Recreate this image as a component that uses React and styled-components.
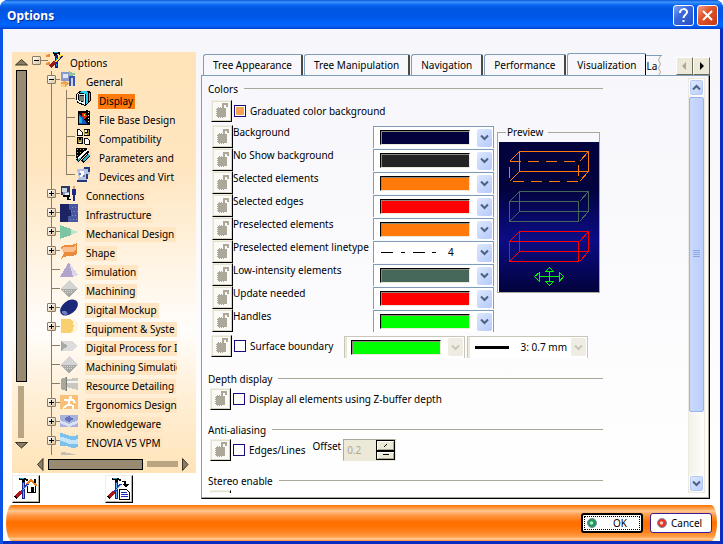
import React from "react";
import styled, { createGlobalStyle, css } from "styled-components";

const Global = createGlobalStyle`
  * { box-sizing: border-box; }
  html, body { margin: 0; height: 100%; }
  body { font: 10px/15px "Noto Sans", "Open Sans", sans-serif; color: #000; background: #fff; }
  button, input, select { font: inherit; color: inherit; margin: 0; padding: 0; border-radius: 0; }
  svg { display: block; flex: none; }
`;

/* ---------- window frame ---------- */

const Window = styled.div`
  display: flex;
  flex-direction: column;
  height: 100vh;
  overflow: hidden;
  border-radius: 8px 8px 0 0;
  background: linear-gradient(90deg, #0a52e8 50%, #0a2cc0 50%);
`;

const TitleBar = styled.header`
  display: flex;
  align-items: center;
  gap: 3px;
  height: 29px;
  flex: none;
  padding: 2px 5px 0 7px;
  background: linear-gradient(#0a52d8 0, #3c96ff 2px, #0a66f0 5px, #0055e2 9px, #0058ea 18px, #0066ff 25px, #0050e0 28px, #003dc4 29px);
`;

const Title = styled.h1`
  flex: 1;
  margin: 0;
  font: bold 12px/18px "Noto Sans", sans-serif;
  color: #fff;
  text-shadow: 1px 1px 0 #0a2a90;
`;

const CaptionButton = styled.button`
  display: grid;
  place-items: center;
  width: 21px;
  height: 21px;
  border: 1px solid #fff;
  border-radius: 3px;
  background: ${(p) =>
    p.$close
      ? "linear-gradient(135deg, #f0a08a, #e0552c 40%, #c43a12)"
      : "linear-gradient(135deg, #7fa4f4, #3a68dc 40%, #2450c8)"};
`;

const Client = styled.main`
  display: flex;
  gap: 5px;
  flex: 1;
  min-height: 0;
  margin: 0 3px;
  padding: 23px 10px 0 9px;
  background: linear-gradient(#f6f6fb, #fff);
`;

/* ---------- tree side ---------- */

const Side = styled.aside`
  display: flex;
  flex-direction: column;
  gap: 2px;
  width: 184px;
  flex: none;
  padding-bottom: 2px;
`;

const TreePanel = styled.nav`
  display: grid;
  grid-template: minmax(0, 1fr) 18px / 20px minmax(0, 1fr);
  flex: 1;
  min-height: 0;
  background: linear-gradient(#ffe4b9 0, #ffe6c0 28%, #fff5e6 52%, #fffdfa 66%, #ffefd6 82%, #ffe4b9 100%);
`;

const VBar = styled.div`
  display: flex;
  flex-direction: column;
  align-items: center;
  gap: 4px;
  padding: 7px 4px 6px 2px;
`;

const HBar = styled.div`
  grid-column: 1 / -1;
  display: flex;
  align-items: center;
  gap: 4px;
  padding: 0 7px 0 25px;
`;

const TreeThumb = styled.div`
  border: 1px solid #000;
  background: #998a72;
  ${(p) => (p.$h ? css`flex: 94; height: 11px;` : css`flex: 311; width: 11px;`)}
`;

const TreeTrack = styled.div`
  background: #b9a582;
  ${(p) => (p.$h ? css`flex: 32; height: 6px;` : css`flex: 52; width: 6px;`)}
`;

const TreeList = styled.ul`
  list-style: none;
  margin: 0 19px 0 0;
  padding: 0;
  overflow: hidden;
`;

const TreeRow = styled.li`
  display: flex;
  align-items: flex-start;
  height: 19px;
`;

const Trunk = styled.span`
  flex: none;
  width: 15px;
  height: 19px;
  background: ${(p) => (p.$line ? "linear-gradient(#8a7c66, #8a7c66) 4px 0 / 1px 100% no-repeat" : "none")};
`;

const Branch = styled.span`
  flex: none;
  width: 13px;
  height: 19px;
  padding-top: 4px;
  background:
    linear-gradient(#8a7c66, #8a7c66) 4px 8px / 9px 1px no-repeat,
    linear-gradient(#8a7c66, #8a7c66) 4px 0 / 1px ${(p) => (p.$root ? "0" : p.$last ? "9px" : "100%")} no-repeat;
`;

const Toggle = styled.button`
  display: grid;
  place-items: center;
  width: 9px;
  height: 9px;
  border: 1px solid #8a7c66;
  border-radius: 1px;
  background: linear-gradient(135deg, #fff, #d9c39c);
`;

const NodeLabel = styled.a`
  margin: 4px 0 0 ${(p) => (p.$root ? 6 : 7)}px;
  padding: 0 2px 0 1px;
  line-height: 15px;
  white-space: nowrap;
  color: #000;
  text-decoration: none;
  background: ${(p) => (p.$selected ? "#ff7a0a" : "#ffe5c2")};
`;

const Tools = styled.div`
  display: flex;
  gap: 65px;
`;

const ToolButton = styled.button`
  display: grid;
  place-items: center;
  width: 28px;
  height: 28px;
  border: 1px solid;
  border-color: #f0eee4 #000 #000 #f0eee4;
  box-shadow: inset -1px -1px 0 #b5b1a2;
  background: #fff;
`;

/* ---------- tabs ---------- */

const Content = styled.section`
  display: flex;
  flex-direction: column;
  flex: 1;
  min-width: 0;
  padding: 1px 0 6px;
`;

const TabStrip = styled.div`
  display: flex;
  align-items: flex-end;
  height: 22px;
  flex: none;
  padding-left: 2px;
  white-space: nowrap;
`;

const Tab = styled.button`
  height: ${(p) => (p.$active ? 23 : 21)}px;
  flex: none;
  padding: 0 9px;
  border: 1px solid #7f9db9;
  border-bottom: 0;
  border-right: ${(p) => (p.$active ? "1px solid #000" : "2px solid #4a483f")};
  border-radius: 3px 2px 0 0;
  margin: 0 ${(p) => (p.$active ? 0 : 1)}px ${(p) => (p.$active ? -1 : 0)}px 0;
  background: #f8f8fc;
`;

const CutTab = styled.button`
  display: flex;
  height: 20px;
  width: 16px;
  border: 0;
  border-top: 1px solid #7f9db9;
  background: #f8f8fc;
  line-height: 20px;
`;

const TabArrows = styled.div`
  display: flex;
  margin-left: auto;
`;

const TabArrow = styled.button`
  display: grid;
  place-items: center;
  width: 17px;
  height: 18px;
  border: 1px solid;
  border-color: #fff #6e6b5e #6e6b5e #fff;
  background: #ece9d8;
  color: ${(p) => (p.disabled ? "#aca899" : "#000")};
`;

const Panel = styled.div`
  display: flex;
  flex: 1;
  min-height: 0;
  padding: 2px 2px 5px 0;
  border: 1px solid #7f9db9;
  border-right-color: #000;
  border-bottom-color: #000;
  box-shadow: inset -1px -1px 0 #aca899;
`;

const Scroller = styled.div`
  flex: 1;
  min-width: 0;
  padding: 4px 0 0 6px;
  overflow: hidden;
`;

const ScrollBar = styled.div`
  display: flex;
  flex-direction: column;
  gap: 1px;
  width: 17px;
  margin-right: 2px;
  border: 1px solid #eceade;
  background: linear-gradient(90deg, #f2f1ea, #fefefb);
`;

const ScrollButton = styled.button`
  display: grid;
  place-items: center;
  height: 17px;
  flex: none;
  border: 1px solid #fff;
  border-radius: 3px;
  box-shadow: inset 0 0 0 1px #b4c8f6;
  background: linear-gradient(135deg, #e1eafe, #b9cdfb);
`;

const ScrollThumb = styled.div`
  display: grid;
  place-items: center;
  flex: 316;
  border: 1px solid #9ab4ea;
  border-radius: 2px;
  background: linear-gradient(90deg, #c9d8fd, #bccffc);
`;

const ScrollSpace = styled.div`
  flex: 62;
`;

/* ---------- option form ---------- */

const Form = styled.form`
  width: 395px;
`;

const Group = styled.section`
  margin-bottom: ${(p) => (p.$wide ? 15 : 13)}px;
`;

const Heading = styled.h2`
  display: flex;
  align-items: flex-start;
  gap: 6px;
  margin: 0 0 ${(p) => (p.$wide ? 3 : 1)}px;
  font: inherit;
  &::after {
    content: "";
    flex: 1;
    height: 1px;
    margin-top: 6px;
    background: #aca899;
  }
`;

const Line = styled.div`
  display: flex;
  align-items: center;
  gap: 2px;
  height: 22px;
  padding-left: ${(p) => (p.$wide ? 3 : 2)}px;
`;

const LockButton = styled.button`
  display: grid;
  place-items: center;
  flex: none;
  width: 21px;
  height: ${(p) => (p.$tall ? 23 : 22)}px;
  border: 1px solid;
  border-color: #f1efe2 #000 #000 #f1efe2;
  box-shadow: inset -1px -1px 0 #d8d4c2, inset 1px 1px 0 #e4e1d0;
  background: #fbfaf6;
`;

const CheckLabel = styled.label`
  display: flex;
  align-items: center;
  gap: 4px;
  white-space: nowrap;
`;

const Check = styled.input`
  appearance: none;
  width: 12px;
  height: 12px;
  border: 1px solid #1c0a80;
  background: #fff;
  &:checked {
    background: #f5a259;
    box-shadow: inset 0 0 0 1px #fff;
  }
`;

const ColorArea = styled.div`
  display: flex;
  align-items: flex-start;
  gap: 3px;
  margin: 3px 0;
`;

const ColorRows = styled.div`
  display: flex;
  flex-direction: column;
  width: 286px;
  padding-left: 4px;
`;

const ColorRow = styled.div`
  display: flex;
  height: 23px;
`;

const ColorLabel = styled.label`
  flex: 1;
  min-width: 0;
  white-space: nowrap;
`;

const Combo = styled.span`
  display: flex;
  align-items: center;
  flex: none;
  width: 121px;
  height: 22px;
  margin-top: 1px;
  padding: 0 1px 0 6px;
  border: 1px solid ${(p) => (p.$off ? "#c9c7ba" : "#7f9db9")};
  border-bottom: 0;
  background: ${(p) => (p.$off ? "linear-gradient(90deg, #ece9d8 2px, #fff 2px)" : "#fff")};
`;

const Swatch = styled.select`
  appearance: none;
  width: 90px;
  height: 15px;
  margin-right: auto;
  border: 1px solid;
  border-color: #000 #ece9d8 #ece9d8 #000;
  box-shadow: inset 1px 1px 0 #8d8a7c;
  background: ${(p) => p.$color};
  opacity: 1;
`;

const LineSelect = styled.select`
  appearance: none;
  flex: 1;
  min-width: 0;
  border: 0;
  background: none;
  color: #000;
  opacity: 1;
  text-align: ${(p) => (p.$right ? "right" : "left")};
  padding: 0 ${(p) => (p.$right ? 4 : 0)}px 0 ${(p) => (p.$right ? 0 : 10)}px;
`;

const Arrow = styled.span`
  display: grid;
  place-items: center;
  flex: none;
  width: 15px;
  height: 18px;
  border-radius: 2px;
  color: ${(p) => (p.$off ? "#c9c7ba" : "#4d6185")};
  background: ${(p) => (p.$off ? "#efede3" : "linear-gradient(135deg, #dde8fe, #b5cafa)")};
`;

const Preview = styled.fieldset`
  width: 103px;
  margin: 0;
  padding: 2px 0 0 1px;
  border: 1px solid #aca899;
`;

const Legend = styled.legend`
  margin-left: 7px;
  padding: 0 5px 0 1px;
`;

const BoundaryLabel = styled.div`
  width: 108px;
`;

const OffsetLabel = styled.label`
  align-self: flex-start;
  padding-left: 5px;
`;

const Spinner = styled.span`
  display: flex;
  width: 53px;
  height: 22px;
  border: 1px solid;
  border-color: #aca899 #ece9d8 #ece9d8 #aca899;
  background: #ece9d8;
`;

const SpinInput = styled.input`
  flex: 1;
  min-width: 0;
  padding-left: 3px;
  border: 0;
  background: none;
  color: #aca899;
`;

const SpinButtons = styled.span`
  display: grid;
  width: 19px;
`;

const SpinButton = styled.button`
  display: grid;
  place-items: center;
  border: 1px solid #000;
  box-shadow: inset 1px 1px 0 #fff, inset -1px -1px 0 #aca899;
  background: #ece9d8;
`;

/* ---------- footer ---------- */

const Footer = styled.footer`
  flex: none;
  margin: 0 3px;
  padding: 0 3px;
  border-bottom: 3px solid #0a2cc0;
  background: #fff;
`;

const FooterBar = styled.div`
  display: flex;
  justify-content: flex-end;
  align-items: center;
  gap: 7px;
  height: 36px;
  padding-right: 5px;
  border-radius: 6px / 18px;
  background: linear-gradient(#ff7400 0, #ff9a45 3px, #ffc890 6px, #ff9a48 10px, #ff8220 14px, #ff7000 17px, #ff7200 21px, #ff8420 27px, #ffa048 32px, #ffd0a0 34px, #ff8a28 36px);
`;

const DialogButton = styled.button`
  display: flex;
  align-items: center;
  width: 62px;
  height: 20px;
  padding-left: ${(p) => (p.$main ? 4 : 6)}px;
  gap: ${(p) => (p.$main ? 16 : 4)}px;
  border: ${(p) => (p.$main ? "2px solid #000" : "1px solid #3a1c9a")};
  border-radius: 3px;
  outline: ${(p) => (p.$main ? "1px dotted #000" : "none")};
  outline-offset: -4px;
  background: #fff;
`;

/* ---------- drawings ---------- */

const NodeSvg = (p) => <svg width="18" height="18" viewBox="0 0 18 18" shapeRendering="crispEdges" aria-hidden="true" {...p} />;

const nodeIcons = {
  options: (
    <>
      <path fill="#e88c3c" d="M1 2h4v3H1zM1 10h4v3H1z" />
      <path fill="#f9c79a" d="M1 2h2v1H1zM1 10h2v1H1z" />
      <path stroke="#8a7c66" fill="none" d="M0 8.500h3" />
      <path fill="#000" d="M8 0h7v3h-1V2h-2v2H9V2H8z" />
      <path fill="#12a5d8" d="M9 0h4v1H9z" />
      <path fill="#16169c" d="M10 3h3v13h-3z" />
      <path fill="#12a5d8" d="M11 6h1v8h-1z" />
      <path stroke="#ffe21c" strokeWidth="2" d="M17 3l-7 8" />
      <path stroke="#16169c" d="M17.500 4l-7 8" />
      <path stroke="#a0141c" strokeWidth="3" d="M10 10l-5 5" />
    </>
  ),
  general: (
    <>
      <path fill="#8b99c8" d="M1 1h8v9H1z" />
      <path fill="#dfe6f6" d="M3 3h5v4H3z" />
      <path fill="#88c4a4" d="M9 0l7 3-7 4z" />
      <path fill="#3d55a8" d="M9 5h6v10H9z" />
      <path fill="#c9d3ef" d="M11 7h2v8h-2z" />
      <path fill="#f0a050" d="M1 11l4-1 4 2-3 4H1z" />
      <path fill="#f8d080" d="M1 13h4v3H1z" />
    </>
  ),
  display: (
    <>
      <path fill="#000" d="M3 2l3-2h8l3 2v9l-5 5h-2L2 13 1 5z" />
      <path fill="#28d0f0" d="M6 1h7l1 1v11l-2 2V4L5 2zM15 2l1 1v8l-1 1z" />
      <path fill="#e8fbff" d="M3 3l7 1 1 1v9l-1 1-7-3-1-2V5z" />
      <path fill="#000" d="M3 4l6 1 1 1v7l-6-2-1-2z" />
      <path fill="#7c8474" d="M4 5l5 1v6l-5-2z" />
    </>
  ),
  file: (
    <>
      <path fill="#000" d="M3 2h9V0h2v2h2v14H3z" />
      <path fill="#1554c4" d="M4 4l5 5 4 6H4z" />
      <path fill="#14b8e0" d="M4 6l3 3v5H4z" />
      <path fill="#e42410" d="M7 4h4l2 3-3 3-3-3z" />
      <path fill="#ffe020" d="M9 5h2v2H9z" />
      <path stroke="#fff" strokeDasharray="1 2" d="M14.500 3v12" />
    </>
  ),
  compat: (
    <>
      <path fill="#fff" stroke="#000" d="M2.500 1.500h3l2 2v4h-5zM10.500 10.500h3l2 2v4h-5z" />
      <path fill="#000" d="M9 1h7v7H9zM2 9h6v7H2z" />
      <path fill="#a89430" d="M10 2h1v3h3V2h1v5h-5zM3 10h1v2h2v-2h1v5H3z" />
      <path fill="#fff" d="M11 2h2v2h-2zM11 6h2v1h-2zM4 14h2v1H4z" />
    </>
  ),
  params: (
    <>
      <path fill="#f8d8b8" d="M1 1h16v15H1z" />
      <path fill="#000" d="M1 1h12L3 11H1z" />
      <path stroke="#d8c040" strokeDasharray="1 2" d="M2 2.500h9M2 5.500h6M2 8.500h3" />
      <path stroke="#000" strokeWidth="4" d="M2 14L14 3" />
      <path stroke="#fff" strokeWidth="2" d="M3 12L14 2" />
      <path stroke="#000" strokeWidth="4" d="M8 15l7-7" />
      <path stroke="#2ab4c8" strokeWidth="2" d="M9 14l6-6M3 14l3-3" />
    </>
  ),
  devices: (
    <>
      <path fill="#b8c4e4" d="M2 3h6l2-2h6v6l-3 3v6H2l2-5z" />
      <path fill="#28387c" d="M10 1h6v5h-2V3h-4zM2 14h11v2H2zM12 8h2v5h-2z" />
      <path fill="#fff" d="M5 5h4l1 4-4 3z" />
      <path fill="#6478b8" d="M4 7h2v2H4zM8 9h3v2H8z" />
    </>
  ),
  connections: (
    <>
      <path fill="#2a3a60" d="M1 1h9v9H1z" />
      <path fill="#c8d4e8" d="M2 3h5v4H2z" />
      <path fill="#8ca0c4" d="M3 7h6v3H3z" />
      <path fill="#000" d="M3 10h7v2H3zM7 12h4v3H7z" />
      <path fill="#e8eef8" d="M5 8h4v2H5zM9 12h3v2H9z" />
      <path fill="#dca078" d="M13 1h2v3h-2z" />
      <path fill="#1c2c80" d="M12 4h4v6h-1v6h-2v-6h-1z" />
    </>
  ),
  infra: (
    <>
      <path fill="#4858a0" d="M0 0h18v18H0z" />
      <path fill="#1c2464" d="M0 0h9v6h2v6H8v6H0z" />
      <path stroke="#8090c8" strokeDasharray="1 2" d="M12 3.500h6M11 7.500h7M12 11.500h6M10 15.500h8" />
    </>
  ),
  mech: (
    <>
      <path fill="#7cc4a4" d="M0 2l11 4v6L0 16z" />
      <path fill="#b8e4d0" d="M11 6l7 3-7 3z" />
    </>
  ),
  shape: (
    <>
      <path fill="#e88c3c" d="M1 6c3-6 8 0 16-5v10c-5 7-10 0-16 6l3-6z" />
      <path fill="#f8c090" d="M2 6c4-4 9 2 14-3v5c-6 5-8-1-13 3z" />
    </>
  ),
  simulation: (
    <>
      <path fill="#b0a4cc" d="M9 1L0 16h13z" />
      <path fill="#dcd8ea" d="M9 1l9 13-5 2z" />
    </>
  ),
  machining: (
    <>
      <path fill="#d4d4d4" d="M9 0l9 9H0z" />
      <path fill="#a8a8a4" d="M0 9h18l-9 8z" />
      <path stroke="#d8d8d8" strokeDasharray="1 1" d="M3 10.500h12M5 12.500h8" />
    </>
  ),
  mockup: (
    <g shapeRendering="auto">
      <ellipse cx="9" cy="8.500" rx="10" ry="6.500" transform="rotate(-38 9 8.500)" fill="#1c2878" />
      <path fill="#7080c0" d="M2 12h4l2 3-3 1-3-2z" />
    </g>
  ),
  equipment: (
    <>
      <path fill="#fff4dc" d="M10 2h5l3 4v5l-3 4h-5z" />
      <path fill="#f8d070" d="M1 1h9c5 2 5 12 0 14H1z" />
    </>
  ),
  process: (
    <>
      <path fill="#dcdcdc" d="M1 4h11l6 5-6 5H1z" />
      <path fill="#a8a8a8" d="M1 4l7 5-7 5z" />
    </>
  ),
  resource: (
    <>
      <path fill="#a8a8a0" d="M1 4l5-2v14l-5-2z" />
      <path fill="#c8c8c0" d="M6 4l12-1v12L6 12z" />
      <path fill="#f4f4f0" d="M6 6h12v2H6z" />
      <path stroke="#808078" fill="none" d="M6.500 2v14" />
    </>
  ),
  ergo: (
    <>
      <path fill="#f8c078" d="M0 1h18v14H0z" />
      <path fill="#fff" d="M9 2h3v3H9z" />
      <path stroke="#fff" strokeWidth="2" fill="none" d="M4 6h9l2 3M10 6l-2 5-5 3M8 10l5 2v3" />
    </>
  ),
  knowledge: (
    <>
      <path fill="#a8b0dc" d="M0 2h18v12H0z" />
      <path fill="#dce0f4" d="M0 7l9 4 9-4v3l-9 4-9-4z" />
      <path fill="#6474b8" d="M9 3l5 3-5 3-5-3z" />
    </>
  ),
  enovia: (
    <>
      <path fill="#c4e4f8" d="M0 1c6 0 8 5 18 2v12c-8 3-10-3-18-1z" />
      <path fill="#7cc0ec" d="M0 1c6 0 8 5 18 2v4C8 10 6 4 0 5zM0 9c6 0 8 5 18 3v3c-8 3-10-3-18-1z" />
    </>
  ),
  tail: <path fill="#c4c0b4" d="M1 1h5v4H1zM6 2h5v3H6zM11 3h4v2h-4z" />,
};

const Chevron = ({ up }) => (
  <svg width="9" height="7" viewBox="0 0 9 7" fill="none" stroke={up === undefined ? "currentColor" : "#4d6185"} strokeWidth="2" aria-hidden="true">
    <path d={up ? "M1 5.500l3.500-3.500L8 5.500" : "M1 1.500L4.500 5 8 1.500"} />
  </svg>
);

const TreeArrow = ({ dir }) => {
  const flat = dir === "up" || dir === "down";
  const d = { up: "M6.500 .5L12.500 6H.5z", down: "M.5 .5h12L6.500 6z", left: "M6 .5v12L.5 6.500z", right: "M.5 .5L6 6.500.5 12.500z" }[dir];
  return (
    <svg width={flat ? 13 : 7} height={flat ? 7 : 13} aria-hidden="true">
      <path d={d} fill="#8a7c66" stroke="#3c3424" />
    </svg>
  );
};

const LockIcon = () => (
  <svg width="14" height="16" viewBox="0 0 14 16" shapeRendering="crispEdges" fill="#aca899" aria-hidden="true">
    <path d="M2 5h9v9H2zM7 0h6v4h-2V2H9v3H7z" />
    <path d="M1 6h1v1H1zM1 8h1v1H1zM1 10h1v1H1zM1 12h1v1H1zM3 4h1v1H3zM5 4h1v1H5zM3 14h1v1H3zM5 14h1v1H5zM7 14h1v1H7z" />
  </svg>
);

const Hammer = () => (
  <>
    <path fill="#000" d="M5 0h7v1h2v2h-2V2h-1v2H8V2H5z" />
    <path fill="#1ca8d0" d="M6 0h4v1H6z" />
    <path fill="#1c2490" d="M8 4h3v17H8z" />
    <path fill="#5cb8e8" d="M9 5h1v15H9z" />
    <path stroke="#1c3cc0" strokeWidth="2" d="M14 6l-8 9" />
    <path stroke="#a8c8f8" d="M14 7l-5 5" />
    <path stroke="#000" strokeWidth="4" d="M7 14l-6 6" />
    <path stroke="#b0141c" strokeWidth="3" d="M7 14l-5 5" />
  </>
);

const HomeToolIcon = () => (
  <svg width="24" height="23" viewBox="0 0 24 23" shapeRendering="crispEdges" aria-hidden="true">
    <path fill="#fff" stroke="#000" d="M13.500 7v7h8V7L17 2.500 13.500 6" />
    <path stroke="#e88020" strokeWidth="2" fill="none" d="M12 7l5-5 6 6" />
    <path fill="#000" d="M17 9h3v5h-3zM20 1h2v4h-2z" />
    <Hammer />
  </svg>
);

const ListToolIcon = () => (
  <svg width="24" height="23" viewBox="0 0 24 23" shapeRendering="crispEdges" aria-hidden="true">
    <Hammer />
    <path fill="#fff" stroke="#000" d="M12.500 11.500h7l3 3v7h-10z" />
    <path stroke="#1c2cc0" d="M14 14.500h6M14 16.500h7M14 18.500h7" />
    <path fill="#000" d="M15 3h4v3h3l-3 4-4-4h2V4h-2z" />
  </svg>
);

const Box = ({ y, color, hidden }) => (
  <g fill="none" stroke={color} shapeRendering="crispEdges">
    <path d={`M20.500 ${y + 0.5}H89.500V${y + 20.5}H20.500Z`} />
    <path d={`M10.500 ${y + 10.5}L20.500 ${y + 0.5}M80.500 ${y + 10.5}L89.500 ${y + 0.5}M10.500 ${y + 30.5}L20.500 ${y + 20.5}M80.500 ${y + 30.5}L89.500 ${y + 20.5}`} />
    {hidden && <path stroke="#000" d={`M10.500 ${y + 10.5}H79.500V${y + 30.5}H10.500Z`} />}
    <path strokeDasharray={hidden ? "11 7" : "none"} d={`M10.500 ${y + 10.5}H79.500V${y + 30.5}H10.500Z`} />
  </g>
);

const PreviewScene = () => (
  <svg width="100" height="150" viewBox="0 0 100 150" role="img" aria-label="Color preview">
    <defs>
      <linearGradient id="scene" x1="0" y1="0" x2="0" y2="1">
        <stop offset="0" stopColor="#02023c" />
        <stop offset=".3" stopColor="#02023c" />
        <stop offset=".65" stopColor="#0c0c86" />
        <stop offset="1" stopColor="#02023c" />
      </linearGradient>
    </defs>
    <path fill="url(#scene)" d="M0 0h100v150H0z" />
    <Box y={9} color="#ff7a0a" hidden />
    <Box y={49} color="#46685a" />
    <Box y={89} color="#f00" />
    <g fill="none" stroke="#00f000" shapeRendering="crispEdges">
      <path d="M50.500 130v10M40 134.500h20M46.500 129.500h8l-4-4zM46.500 139.500h8l-4 4zM40.500 130.500v9l-5-5zM60.500 130.500v9l4-5z" />
    </g>
  </svg>
);

const StatusBall = ({ color, light }) => (
  <svg width="10" height="10" viewBox="0 0 10 10" aria-hidden="true">
    <circle cx="5" cy="5" r="4.500" fill={color} stroke="#7a8aa0" />
    <circle cx="4.500" cy="5" r="1.800" fill={light} />
  </svg>
);

/* ---------- data ---------- */

const nodes = [
  ["Options", "options", 0, "-"],
  ["General", "general", 1, "-"],
  ["Display", "display", 2],
  ["File Base Design", "file", 2],
  ["Compatibility", "compat", 2],
  ["Parameters and", "params", 2],
  ["Devices and Virt", "devices", 2, "", true],
  ["Connections", "connections", 1, "+"],
  ["Infrastructure", "infra", 1, "+"],
  ["Mechanical Design", "mech", 1, "+"],
  ["Shape", "shape", 1, "+"],
  ["Simulation", "simulation", 1],
  ["Machining", "machining", 1],
  ["Digital Mockup", "mockup", 1, "+"],
  ["Equipment & Syste", "equipment", 1, "+"],
  ["Digital Process for I", "process", 1],
  ["Machining Simulatic", "machining", 1],
  ["Resource Detailing", "resource", 1],
  ["Ergonomics Design", "ergo", 1, "+"],
  ["Knowledgeware", "knowledge", 1, "+"],
  ["ENOVIA V5 VPM", "enovia", 1, "+"],
  ["", "tail", 1],
];

const colors = [
  ["Background", "#02023c"],
  ["No Show background", "#242424"],
  ["Selected elements", "#ff7a0a"],
  ["Selected edges", "#ff0000"],
  ["Preselected elements", "#ff7a0a"],
  ["Preselected element linetype", null],
  ["Low-intensity elements", "#46685a"],
  ["Update needed", "#ff0000"],
  ["Handles", "#00ff00"],
];

const tabs = ["Tree Appearance", "Tree Manipulation", "Navigation", "Performance", "Visualization"];

/* ---------- components ---------- */

const TreeNode = ({ node: [text, icon, level, toggle, last] }) => (
  <TreeRow>
    {level > 0 && <Trunk />}
    {level > 1 && <Trunk $line />}
    <Branch $root={level === 0} $last={last}>
      {toggle && (
        <Toggle aria-label={`${toggle === "+" ? "Expand" : "Collapse"} ${text}`}>
          <svg width="5" height="5" stroke="#000" aria-hidden="true">
            <path d={toggle === "+" ? "M0 2.500h5M2.500 0v5" : "M0 2.500h5"} />
          </svg>
        </Toggle>
      )}
    </Branch>
    <NodeSvg width={level === 2 ? 17 : 18}>{nodeIcons[icon]}</NodeSvg>
    {text && (
      <NodeLabel href="#" $root={level !== 1} $selected={text === "Display"}>
        {text}
      </NodeLabel>
    )}
  </TreeRow>
);

const Lock = ({ name, tall }) => (
  <LockButton type="button" $tall={tall} aria-label={`Lock ${name}`}>
    <LockIcon />
  </LockButton>
);

const CheckRow = ({ label, checked, wide, children }) => (
  <Line $wide={wide}>
    <Lock name={label} />
    <CheckLabel>
      <Check type="checkbox" defaultChecked={checked} />
      {label}
    </CheckLabel>
    {children}
  </Line>
);

const ColorCombo = ({ id, color, off, label }) => (
  <Combo $off={off}>
    <Swatch id={id} $color={color} disabled={off} aria-label={label}>
      <option value={color} aria-label={color} />
    </Swatch>
    <Arrow $off={off}>
      <Chevron />
    </Arrow>
  </Combo>
);

export default function App() {
  return (
    <>
      <Global />
      <Window>
        <TitleBar>
          <Title>Options</Title>
          <CaptionButton aria-label="Help">
            <svg width="13" height="15" viewBox="0 0 13 15" fill="none" stroke="#fff" strokeWidth="2" aria-hidden="true">
              <path d="M3 5c0-5 7-5 7-1 0 3-3.500 2.500-3.500 6M6.500 12v2" />
            </svg>
          </CaptionButton>
          <CaptionButton $close aria-label="Close">
            <svg width="13" height="13" stroke="#fff" strokeWidth="2" aria-hidden="true">
              <path d="M2 2l9 9M11 2l-9 9" />
            </svg>
          </CaptionButton>
        </TitleBar>
        <Client>
          <Side>
            <TreePanel aria-label="Option categories">
              <VBar>
                <TreeArrow dir="up" />
                <TreeThumb />
                <TreeTrack />
                <TreeArrow dir="down" />
              </VBar>
              <TreeList>
                {nodes.map((n, i) => (
                  <TreeNode key={i} node={n} />
                ))}
              </TreeList>
              <HBar>
                <TreeArrow dir="left" />
                <TreeThumb $h />
                <TreeTrack $h />
                <TreeArrow dir="right" />
              </HBar>
            </TreePanel>
            <Tools>
              <ToolButton aria-label="Reset parameters">
                <HomeToolIcon />
              </ToolButton>
              <ToolButton aria-label="Dump parameters">
                <ListToolIcon />
              </ToolButton>
            </Tools>
          </Side>
          <Content>
            <TabStrip>
              {tabs.map((t) => (
                <Tab key={t} $active={t === "Visualization"}>
                  {t}
                </Tab>
              ))}
              <CutTab aria-label="Layers">
                La
                <svg width="5" height="20" fill="none" stroke="#aca899" aria-hidden="true">
                  <path d="M3.500 0l-2 4 2 4-2 4 2 4-2 4" />
                </svg>
              </CutTab>
              <TabArrows>
                <TabArrow disabled aria-label="Previous tabs">
                  <svg width="5" height="8" fill="currentColor" aria-hidden="true">
                    <path d="M4 0v8L0 4z" />
                  </svg>
                </TabArrow>
                <TabArrow aria-label="Next tabs">
                  <svg width="5" height="8" fill="currentColor" aria-hidden="true">
                    <path d="M1 0v8l4-4z" />
                  </svg>
                </TabArrow>
              </TabArrows>
            </TabStrip>
            <Panel>
              <Scroller>
                <Form>
                  <Group $wide>
                    <Heading $wide>Colors</Heading>
                    <CheckRow label="Graduated color background" checked wide />
                    <ColorArea>
                      <ColorRows>
                        {colors.map(([label, color], i) => (
                          <ColorRow key={label}>
                            <Lock name={label} tall />
                            <ColorLabel htmlFor={`color-${i}`}>{label}</ColorLabel>
                            {color ? (
                              <ColorCombo id={`color-${i}`} color={color} />
                            ) : (
                              <Combo>
                                <svg width="58" height="3" stroke="#000" aria-hidden="true">
                                  <path d="M1 1.500h12M21 1.500h4M33 1.500h12M52 1.500h4" />
                                </svg>
                                <LineSelect id={`color-${i}`}>
                                  <option>4</option>
                                </LineSelect>
                                <Arrow>
                                  <Chevron />
                                </Arrow>
                              </Combo>
                            )}
                          </ColorRow>
                        ))}
                      </ColorRows>
                      <Preview>
                        <Legend>Preview</Legend>
                        <PreviewScene />
                      </Preview>
                    </ColorArea>
                    <Line $wide>
                      <Lock name="Surface boundary" />
                      <BoundaryLabel>
                        <CheckLabel>
                          <Check type="checkbox" />
                          Surface boundary
                        </CheckLabel>
                      </BoundaryLabel>
                      <ColorCombo color="#00ff00" off label="Surface boundary color" />
                      <Combo $off>
                        <svg width="35" height="3" aria-hidden="true">
                          <path d="M1 0h34v3H1z" />
                        </svg>
                        <LineSelect $right disabled aria-label="Surface boundary thickness">
                          <option>3: 0.7 mm</option>
                        </LineSelect>
                        <Arrow $off>
                          <Chevron />
                        </Arrow>
                      </Combo>
                    </Line>
                  </Group>
                  <Group>
                    <Heading>Depth display</Heading>
                    <CheckRow label="Display all elements using Z-buffer depth" />
                  </Group>
                  <Group>
                    <Heading>Anti-aliasing</Heading>
                    <CheckRow label="Edges/Lines">
                      <OffsetLabel htmlFor="offset">Offset</OffsetLabel>
                      <Spinner>
                        <SpinInput id="offset" disabled defaultValue="0.2" />
                        <SpinButtons>
                          <SpinButton type="button" aria-label="Increase">
                            <svg width="5" height="3" stroke="#000" aria-hidden="true">
                              <path d="M1 3l3-3" />
                            </svg>
                          </SpinButton>
                          <SpinButton type="button" aria-label="Decrease">
                            <svg width="6" height="2" aria-hidden="true">
                              <path d="M0 0h6v1H0z" />
                            </svg>
                          </SpinButton>
                        </SpinButtons>
                      </Spinner>
                    </CheckRow>
                  </Group>
                  <Group>
                    <Heading>Stereo enable</Heading>
                    <Line>
                      <Lock name="Stereo enable" />
                    </Line>
                  </Group>
                </Form>
              </Scroller>
              <ScrollBar>
                <ScrollButton aria-label="Scroll up">
                  <Chevron up />
                </ScrollButton>
                <ScrollThumb>
                  <svg width="7" height="8" stroke="#8ca8e4" aria-hidden="true">
                    <path d="M0 .5h7M0 2.500h7M0 4.500h7M0 6.500h7" />
                  </svg>
                </ScrollThumb>
                <ScrollSpace />
                <ScrollButton aria-label="Scroll down">
                  <Chevron up={false} />
                </ScrollButton>
              </ScrollBar>
            </Panel>
          </Content>
        </Client>
        <Footer>
          <FooterBar>
            <DialogButton $main>
              <StatusBall color="#1c9858" light="#a8ecc8" />
              OK
            </DialogButton>
            <DialogButton>
              <StatusBall color="#e83424" light="#ffc8b8" />
              Cancel
            </DialogButton>
          </FooterBar>
        </Footer>
      </Window>
    </>
  );
}
